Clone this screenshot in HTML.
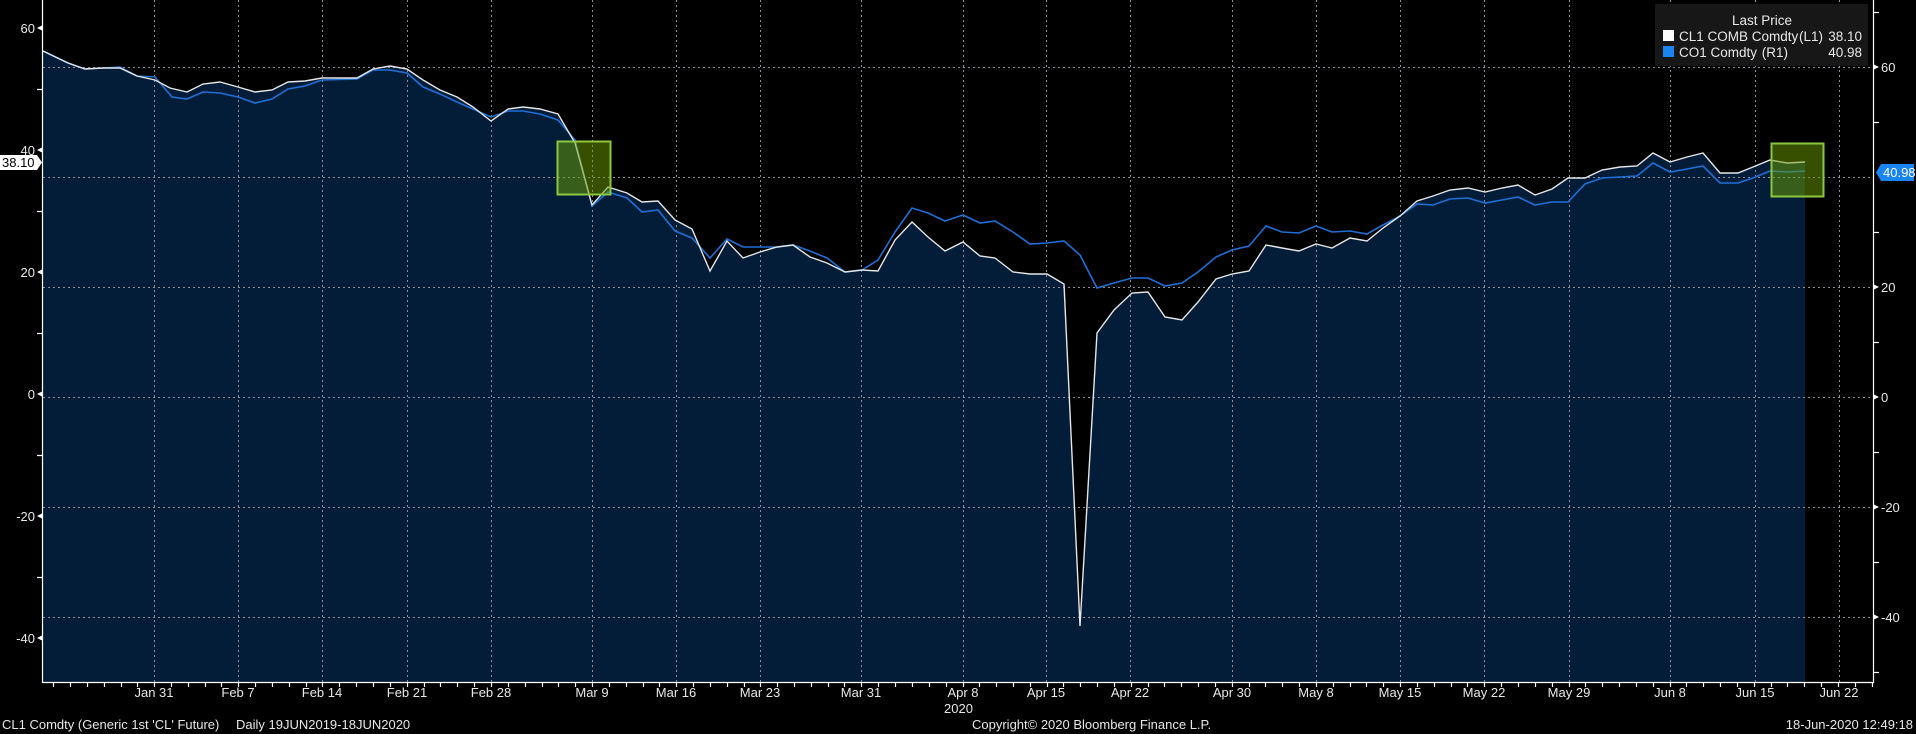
<!DOCTYPE html>
<html><head><meta charset="utf-8"><style>
html,body{margin:0;padding:0;background:#000;width:1916px;height:734px;overflow:hidden}
svg{display:block}
text{font-family:"Liberation Sans","DejaVu Sans",sans-serif;font-size:13px;fill:#e8e8e8}
.lg{font-size:13.5px}
</style></head><body>
<svg width="1916" height="734" viewBox="0 0 1916 734" xmlns="http://www.w3.org/2000/svg">
<rect width="1916" height="734" fill="#000"/>
<path fill="#031d38" d="M43,51 L68,63 L85,69 L103,68 L120,68 L137,76 L155,80 L170,88 L187,92 L203,84 L220,82 L238,87 L255,92 L272,90 L288,82 L305,81 L322,78 L357,78 L373,69 L390,66 L407,69 L423,80 L440,90 L457,97 L473,107 L491,121 L508,109 L523,107 L540,109 L558,114 L575,143 L592,205 L608,187 L627,193 L642,202 L658,201 L675,220 L692,229 L710,271 L727,241 L743,258 L760,252 L777,247 L793,245 L810,257 L827,263 L845,272 L862,270 L878,271 L895,240 L912,222 L928,237 L945,251 L963,242 L980,256 L995,258 L1013,272 L1030,274 L1047,274 L1064,284 L1080,626 L1097,333 L1114,310 L1132,293 L1148,292 L1165,317 L1182,320 L1198,302 L1216,279 L1232,274 L1249,271 L1266,245 L1282,248 L1299,251 L1316,244 L1332,248 L1350,238 L1367,241 L1383,228 L1400,216 L1417,201 L1433,196 L1450,190 L1468,188 L1485,192 L1502,188 L1518,185 L1535,195 L1552,189 L1568,178 L1585,178 L1602,170 L1620,167 L1637,166 L1653,153 L1670,162 L1687,157 L1703,153 L1720,173 L1738,173 L1753,167 L1770,160 L1787,163 L1805,162 L1805,682 L43,682 Z"/>
<g stroke="#8a8f99" stroke-width="1" stroke-dasharray="2,3" fill="none">
<path d="M43,67.5H1873M43,177.5H1873M43,287.5H1873M43,397.5H1873M43,507.5H1873M43,617.5H1873"/>
<path d="M154.5,0V682M238.5,0V682M322.5,0V682M407.5,0V682M491.5,0V682M592.5,0V682M676.5,0V682M760.5,0V682M861.5,0V682M963.5,0V682M1046.5,0V682M1130.5,0V682M1232.5,0V682M1316.5,0V682M1400.5,0V682M1484.5,0V682M1569.5,0V682M1670.5,0V682M1755.5,0V682M1839.5,0V682"/>
</g>
<polyline fill="none" stroke="#1f6fd6" stroke-width="1.6" points="43,51 68,63 85,69 120,67 137,76 155,77 172,97 187,99 203,92 220,93 238,97 255,103 272,99 288,89 305,86 322,80 357,79 373,70 390,70 407,73 423,87 440,94 457,102 473,109 491,117 508,111 523,111 540,114 558,120 575,140 592,206 608,192 627,198 642,212 658,210 675,231 692,238 710,258 727,239 743,247 760,247 777,247 793,245 810,251 827,258 845,272 862,270 878,260 895,232 912,208 928,213 945,221 963,215 980,223 995,221 1013,232 1030,244 1047,243 1064,241 1080,255 1097,288 1114,283 1132,278 1148,278 1165,286 1182,283 1198,272 1216,257 1232,250 1249,246 1266,226 1282,232 1299,233 1316,226 1332,232 1350,231 1367,234 1383,225 1400,216 1417,204 1433,205 1450,199 1468,198 1485,203 1502,200 1518,197 1535,205 1552,202 1568,202 1585,184 1602,178 1620,177 1637,176 1653,163 1670,172 1687,169 1703,166 1720,183 1738,183 1753,178 1770,171 1787,172 1805,171"/>
<polyline fill="none" stroke="#e6e6e6" stroke-width="1.4" points="43,51 68,63 85,69 103,68 120,68 137,76 155,80 170,88 187,92 203,84 220,82 238,87 255,92 272,90 288,82 305,81 322,78 357,78 373,69 390,66 407,69 423,80 440,90 457,97 473,107 491,121 508,109 523,107 540,109 558,114 575,143 592,205 608,187 627,193 642,202 658,201 675,220 692,229 710,271 727,241 743,258 760,252 777,247 793,245 810,257 827,263 845,272 862,270 878,271 895,240 912,222 928,237 945,251 963,242 980,256 995,258 1013,272 1030,274 1047,274 1064,284 1080,626 1097,333 1114,310 1132,293 1148,292 1165,317 1182,320 1198,302 1216,279 1232,274 1249,271 1266,245 1282,248 1299,251 1316,244 1332,248 1350,238 1367,241 1383,228 1400,216 1417,201 1433,196 1450,190 1468,188 1485,192 1502,188 1518,185 1535,195 1552,189 1568,178 1585,178 1602,170 1620,167 1637,166 1653,153 1670,162 1687,157 1703,153 1720,173 1738,173 1753,167 1770,160 1787,163 1805,162"/>
<rect x="557.5" y="141.5" width="53" height="53" fill="rgba(110,160,0,0.5)" stroke="#8dc63f" stroke-width="2"/>
<rect x="1771.5" y="143.5" width="52" height="53" fill="rgba(110,160,0,0.5)" stroke="#8dc63f" stroke-width="2"/>
<g stroke="#fff" stroke-width="1.2" fill="none">
<path d="M42.5,0V683M1873.5,0V683M42.5,682.5H1873.5"/>
<path d="M37,89.5H43M37,211.5H43M37,333.5H43M37,455.5H43M37,577.5H43"/>
<path d="M1873,122.5H1879M1873,232.5H1879M1873,342.5H1879M1873,452.5H1879M1873,562.5H1879M1873,672.5H1879M1873,12.5H1879"/>
<path d="M53.5,683v4M70.5,683v4M87.5,683v4M104.5,683v4M121.5,683v4M137.5,683v4M154.5,683v4M171.5,683v4M188.5,683v4M205.5,683v4M221.5,683v4M238.5,683v4M255.5,683v4M272.5,683v4M289.5,683v4M306.5,683v4M322.5,683v4M339.5,683v4M356.5,683v4M373.5,683v4M390.5,683v4M407.5,683v4M424.5,683v4M440.5,683v4M457.5,683v4M474.5,683v4M491.5,683v4M508.5,683v4M525.5,683v4M542.5,683v4M558.5,683v4M575.5,683v4M592.5,683v4M609.5,683v4M626.5,683v4M643.5,683v4M659.5,683v4M676.5,683v4M693.5,683v4M710.5,683v4M727.5,683v4M744.5,683v4M760.5,683v4M777.5,683v4M794.5,683v4M811.5,683v4M828.5,683v4M844.5,683v4M861.5,683v4M878.5,683v4M895.5,683v4M912.5,683v4M929.5,683v4M946.5,683v4M963.5,683v4M979.5,683v4M996.5,683v4M1013.5,683v4M1030.5,683v4M1047.5,683v4M1063.5,683v4M1080.5,683v4M1097.5,683v4M1114.5,683v4M1131.5,683v4M1148.5,683v4M1164.5,683v4M1181.5,683v4M1198.5,683v4M1215.5,683v4M1232.5,683v4M1249.5,683v4M1265.5,683v4M1282.5,683v4M1299.5,683v4M1316.5,683v4M1333.5,683v4M1350.5,683v4M1366.5,683v4M1383.5,683v4M1400.5,683v4M1417.5,683v4M1434.5,683v4M1451.5,683v4M1467.5,683v4M1484.5,683v4M1501.5,683v4M1518.5,683v4M1535.5,683v4M1552.5,683v4M1569.5,683v4M1585.5,683v4M1602.5,683v4M1619.5,683v4M1636.5,683v4M1653.5,683v4M1670.5,683v4M1686.5,683v4M1703.5,683v4M1720.5,683v4M1737.5,683v4M1754.5,683v4M1771.5,683v4M1787.5,683v4M1804.5,683v4M1821.5,683v4M1838.5,683v4M1855.5,683v4M1872.5,683v4"/>
</g>
<g fill="#fff">
<path d="M37,28 L43,25 L43,31Z M37,150 L43,147 L43,153Z M37,272 L43,269 L43,275Z M37,394 L43,391 L43,397Z M37,516 L43,513 L43,519Z M37,638 L43,635 L43,641Z"/>
<path d="M1873,64 L1879,67 L1873,70Z M1873,284 L1879,287 L1873,290Z M1873,394 L1879,397 L1873,400Z M1873,504 L1879,507 L1873,510Z M1873,614 L1879,617 L1873,620Z"/>
</g>
<g text-anchor="end">
<text x="35" y="33">60</text>
<text x="35" y="155">40</text>
<text x="35" y="277">20</text>
<text x="35" y="399">0</text>
<text x="35" y="521">-20</text>
<text x="35" y="643">-40</text>
</g>
<g>
<text x="1881" y="72">60</text>
<text x="1881" y="292">20</text>
<text x="1881" y="402">0</text>
<text x="1881" y="512">-20</text>
<text x="1881" y="622">-40</text>
</g>
<path d="M0,155 H37 L42,162.5 L37,170 H0Z" fill="#fff"/>
<text x="2" y="167" style="fill:#000">38.10</text>
<path d="M1881,164 H1914 V181 H1881 L1876,172.5Z" fill="#1a84f0"/>
<text x="1883" y="177" style="fill:#fff">40.98</text>
<rect x="1655" y="4" width="213" height="62" fill="#171717"/>
<text class="lg" x="1762" y="25" text-anchor="middle">Last Price</text>
<rect x="1663" y="30" width="11" height="11" fill="#fff"/>
<text class="lg" x="1679" y="41">CL1 COMB Comdty</text>
<text class="lg" x="1823" y="41" text-anchor="end">(L1)</text>
<text class="lg" x="1862" y="41" text-anchor="end">38.10</text>
<rect x="1663" y="46" width="11" height="11" fill="#1a84f0"/>
<text class="lg" x="1679" y="57">CO1 Comdty</text>
<text class="lg" x="1788" y="57" text-anchor="end">(R1)</text>
<text class="lg" x="1862" y="57" text-anchor="end">40.98</text>
<g text-anchor="middle">
<text x="154" y="697">Jan 31</text>
<text x="238" y="697">Feb 7</text>
<text x="322" y="697">Feb 14</text>
<text x="407" y="697">Feb 21</text>
<text x="491" y="697">Feb 28</text>
<text x="592" y="697">Mar 9</text>
<text x="676" y="697">Mar 16</text>
<text x="760" y="697">Mar 23</text>
<text x="861" y="697">Mar 31</text>
<text x="963" y="697">Apr 8</text>
<text x="1046" y="697">Apr 15</text>
<text x="1130" y="697">Apr 22</text>
<text x="1232" y="697">Apr 30</text>
<text x="1316" y="697">May 8</text>
<text x="1400" y="697">May 15</text>
<text x="1484" y="697">May 22</text>
<text x="1569" y="697">May 29</text>
<text x="1670" y="697">Jun 8</text>
<text x="1755" y="697">Jun 15</text>
<text x="1839" y="697">Jun 22</text>
</g>
<text x="944" y="713">2020</text>
<text x="2" y="729">CL1 Comdty (Generic 1st 'CL' Future)</text>
<text x="236" y="729">Daily 19JUN2019-18JUN2020</text>
<text x="972" y="729">Copyright© 2020 Bloomberg Finance L.P.</text>
<text x="1913" y="729" text-anchor="end">18-Jun-2020 12:49:18</text>
</svg>
</body></html>
